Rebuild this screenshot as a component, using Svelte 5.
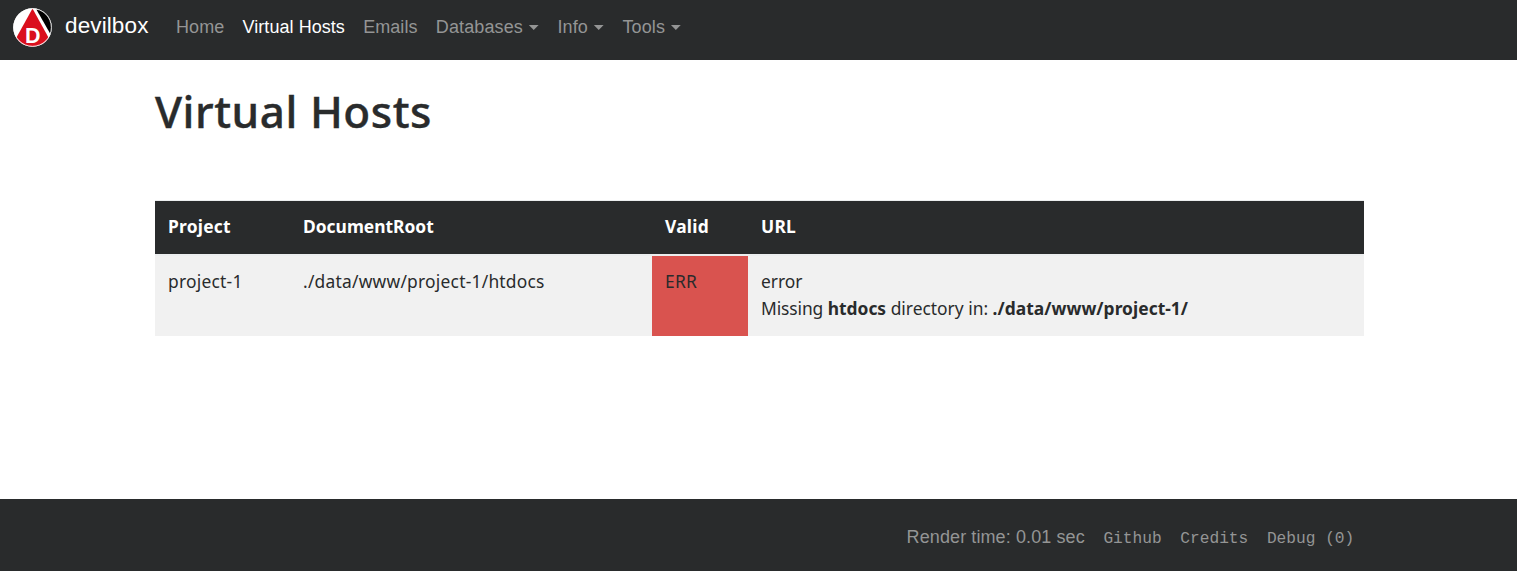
<script>
  const links = [
    { label: 'Home' },
    { label: 'Virtual Hosts', active: true },
    { label: 'Emails' },
    { label: 'Databases', menu: true },
    { label: 'Info', menu: true },
    { label: 'Tools', menu: true }
  ];
  const footerLinks = ['Github', 'Credits', 'Debug (0)'];
</script>

<div class="page">
  <nav>
    <svg class="logo" viewBox="0 0 40 40" width="39" height="39" aria-hidden="true">
      <defs><clipPath id="disc"><circle cx="20" cy="20" r="19.5" /></clipPath></defs>
      <circle cx="20" cy="20" r="19.8" fill="#fff" />
      <g clip-path="url(#disc)">
        <path d="M20 .5 38.5 34 30 42H10L2 33Z" fill="#da0f1d" />
        <path d="M24 1.5 38.5 27 42 20 36 0Z" fill="#000" />
      </g>
      <circle cx="20" cy="20" r="19.3" fill="none" stroke="#fff" stroke-width=".8" />
      <text x="20.3" y="35.6" text-anchor="middle">D</text>
    </svg>
    <a class="brand" href="#top">devilbox</a>
    <ul>
      {#each links as link}
        <li class:active={link.active} class:menu={link.menu}>{link.label}{#if link.menu}<i class="caret"></i>{/if}</li>
      {/each}
    </ul>
  </nav>

  <main>
    <h1>Virtual Hosts</h1>
    <table>
      <colgroup><col class="c1" /><col class="c2" /><col class="c3" /><col class="c4" /></colgroup>
      <thead>
        <tr><th class="wide">Project</th><th>DocumentRoot</th><th class="wide">Valid</th><th class="wide">URL</th></tr>
      </thead>
      <tbody>
        <tr>
          <td class="wide">project-1</td>
          <td class="wide">./data/www/project-1/htdocs</td>
          <td class="danger wide">ERR</td>
          <td>error<br /><span class="missing">Missing</span> <strong>htdocs</strong> directory in: <strong class="path">./data/www/project-1/</strong></td>
        </tr>
      </tbody>
    </table>
  </main>

  <footer>
    <span>Render time: 0.01 sec</span>
    {#each footerLinks as label}<code>{label}</code>{/each}
  </footer>
</div>

<style>
  :global(body) { margin: 0; background: #fff; }
  .page {
    box-sizing: border-box;
    display: flex;
    flex-direction: column;
    height: 571px;
    overflow: hidden;
    color: #292b2c;
    font: 17.4px/27px "Noto Sans", sans-serif;
  }
  nav {
    box-sizing: border-box;
    display: flex;
    align-items: center;
    height: 60px;
    padding: 0 0 5px 13px;
    background: #292b2c;
    font: 18px/27px "Liberation Sans", Arial, sans-serif;
  }
  .logo { overflow: visible; }
  .logo text { fill: #fff; font: bold 22px "Liberation Sans", Arial, sans-serif; }
  .brand { margin: -5px 0 0 13px; color: #fff; font-size: 22.5px; letter-spacing: .12px; text-decoration: none; }
  ul { display: flex; gap: 18.3px; margin: 0 0 0 27.5px; padding: 0; list-style: none; color: #949595; }
  li { white-space: nowrap; letter-spacing: .05px; }
  .menu { letter-spacing: .12px; }
  .active { color: #fff; }
  .caret {
    display: inline-block;
    width: 10.8px;
    height: 5.4px;
    margin-left: 5.4px;
    vertical-align: 3px;
    background: currentColor;
    clip-path: polygon(0 0, 100% 0, 50% 100%);
  }
  main { flex: 1; width: 1209px; margin-left: 155px; }
  h1 { margin: 27px 0 0; font-size: 44px; line-height: 49px; font-weight: 500; letter-spacing: .55px; -webkit-text-stroke: .4px #292b2c; white-space: nowrap; }
  table { width: 1209px; margin-top: 64px; border-collapse: separate; border-spacing: 0; table-layout: fixed; }
  .c1 { width: 135px; }
  .c2 { width: 362px; }
  .c3 { width: 96px; }
  th, td { box-sizing: border-box; padding: 12px 0 14px 13px; text-align: left; vertical-align: top; white-space: nowrap; }
  th { height: 54px; border-top: 1px solid #eceeef; background: #292b2c; color: #fff; font-weight: 700; }
  td { height: 82px; border-top: 2px solid #eceeef; background: #f1f1f1; }
  .wide { letter-spacing: .23px; }
  .missing { letter-spacing: -.1px; }
  .path { letter-spacing: .04px; }
  .danger { background: #d9534f; }
  footer {
    box-sizing: border-box;
    display: flex;
    gap: 18.6px;
    justify-content: flex-end;
    height: 72px;
    padding: 25px 162.7px 0 0;
    background: #292b2c;
    color: #949595;
    font: 18px/27px "Liberation Sans", Arial, sans-serif;
  }
  footer span { letter-spacing: .1px; }
  code { padding-top: 2px; font: 16.2px/27px "Liberation Mono", monospace; }
</style>
